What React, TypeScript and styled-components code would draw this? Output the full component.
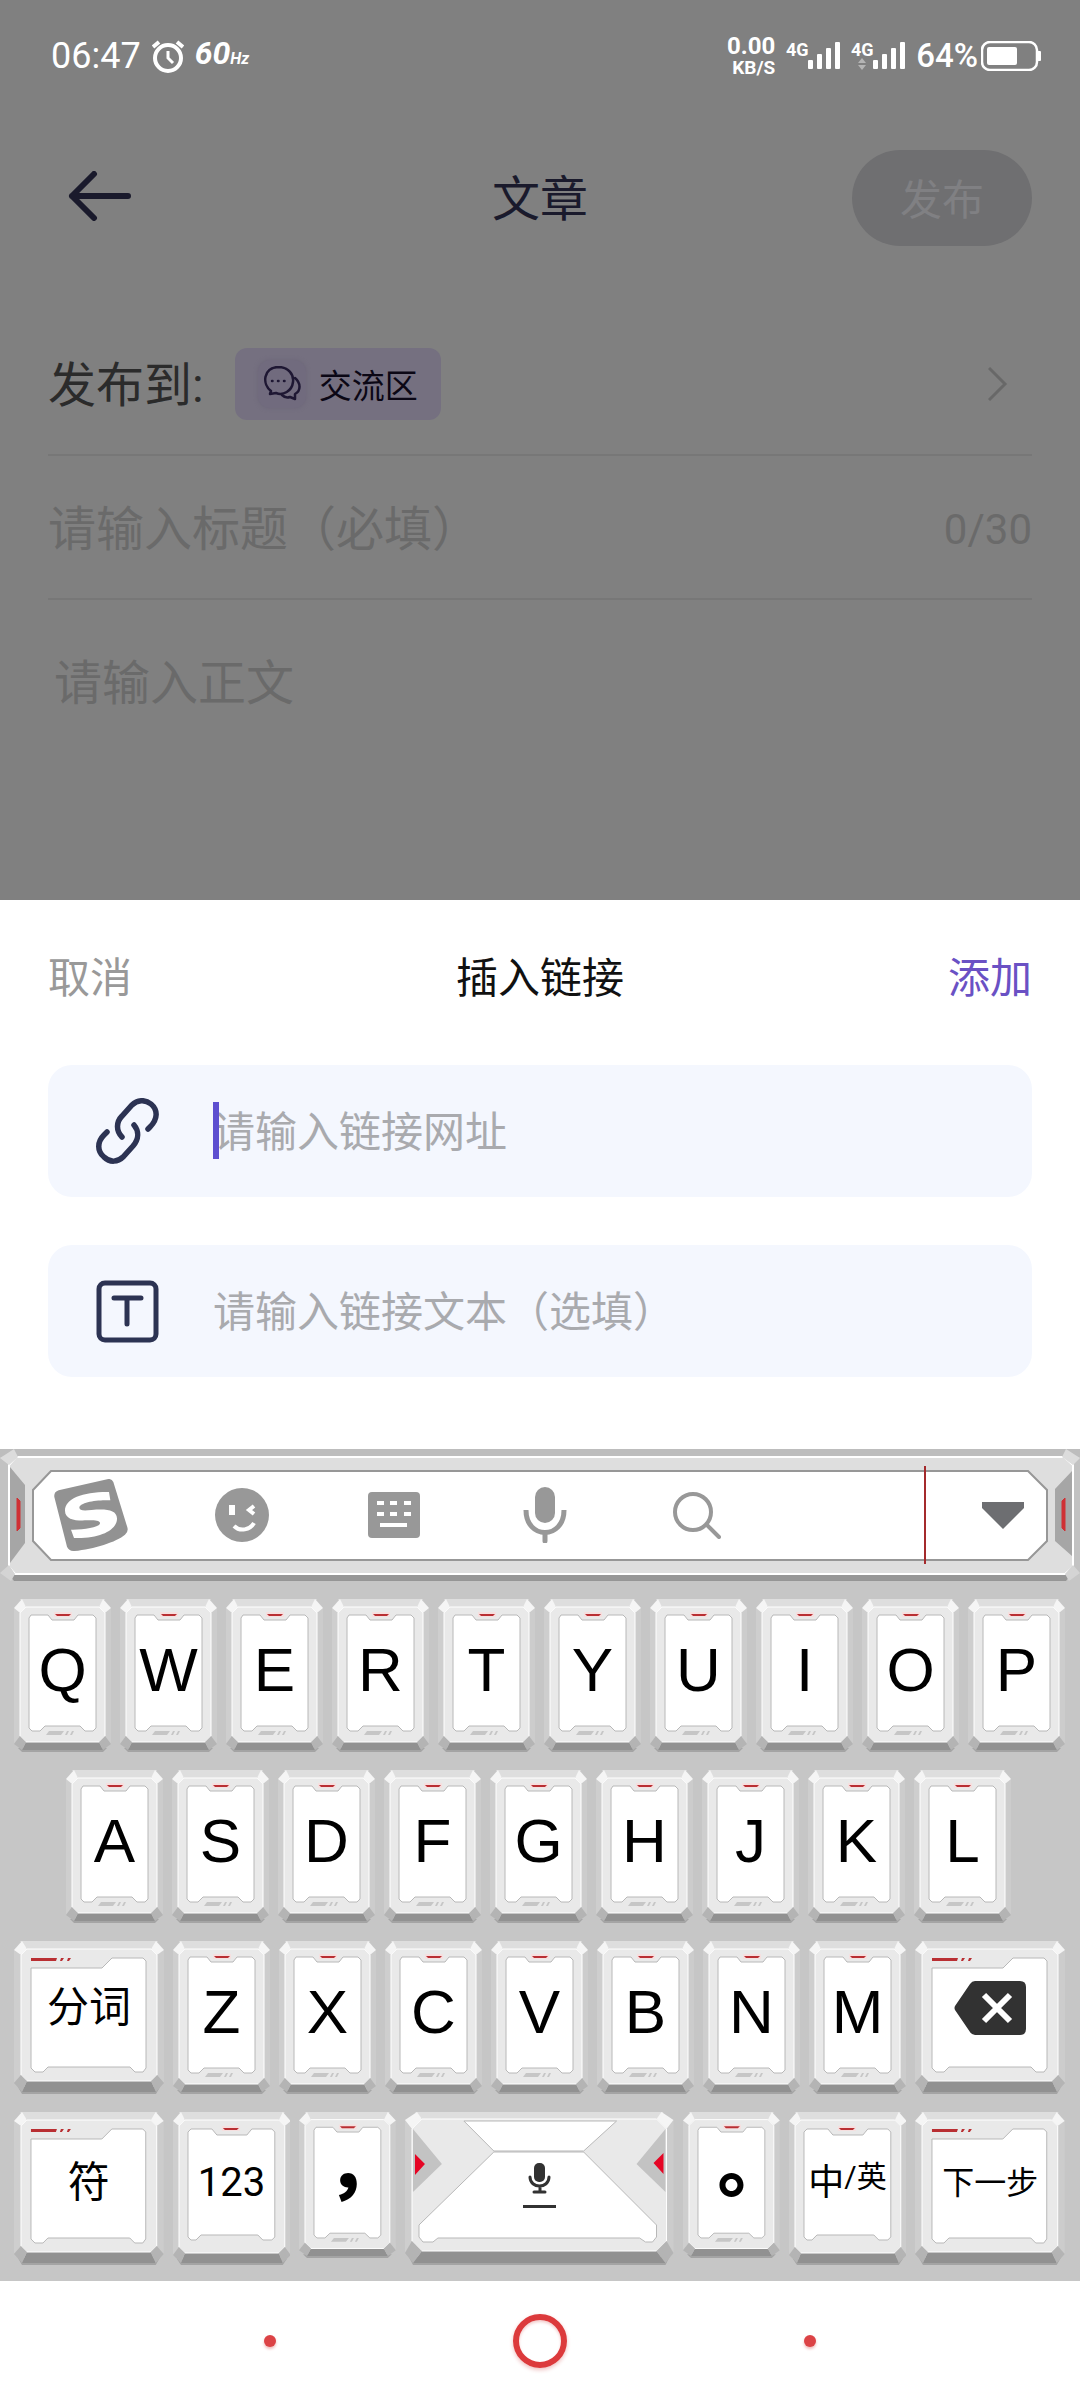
import React from "react";
import styled, { createGlobalStyle } from "styled-components";

const GlobalStyle = createGlobalStyle`
  *, *::before, *::after { box-sizing: border-box; }
  body { margin: 0; background: #fff; }
  button, input, textarea {
    margin: 0; padding: 0; border: 0; background: none;
    font: inherit; color: inherit; outline: none;
  }
  svg { display: block; flex: none; }
`;

const Screen = styled.div`
  display: flex;
  flex-direction: column;
  min-height: 100vh;
  font-family: Roboto, "Noto Sans CJK SC", sans-serif;
`;

/* ---------- dimmed editor ---------- */

const Editor = styled.main`
  flex: 1;
  display: flex;
  flex-direction: column;
  background: #808080;
`;

const StatusBar = styled.div`
  display: flex;
  align-items: center;
  justify-content: space-between;
  height: 112px;
  padding: 0 39px 0 51px;
  color: #fff;
`;

const StatusGroup = styled.div`
  display: flex;
  align-items: center;
  gap: 11px;
`;

const Clock = styled.time`
  font-size: 36px;
  line-height: 40px;
`;

const Refresh = styled.span`
  font-size: 32px;
  line-height: 40px;
  font-weight: 700;
  font-style: italic;
  small { font-size: 16px; }
`;

const NetSpeed = styled.div`
  display: flex;
  flex-direction: column;
  align-items: flex-end;
  font-size: 24px;
  line-height: 24px;
  font-weight: 700;
  span:last-child { font-size: 19px; line-height: 20px; }
`;

const Signal = styled.div`
  display: flex;
  align-items: flex-end;
`;

const SignalLabel = styled.span`
  display: flex;
  flex-direction: column;
  align-items: center;
  height: 28px;
  width: 22px;
  font-size: 18px;
  line-height: 16px;
  font-weight: 700;
`;

const BatteryGroup = styled.div`
  display: flex;
  align-items: center;
  gap: 3px;
  font-size: 33px;
  line-height: 40px;
  font-weight: 500;
`;

const TitleBar = styled.header`
  display: grid;
  grid-template-columns: 1fr auto 1fr;
  align-items: center;
  height: 172px;
  padding: 0 48px;
`;

const BackButton = styled.button`
  justify-self: start;
  padding: 0 20px 5px;
`;

const PageTitle = styled.h1`
  margin: 0;
  padding-top: 4px;
  font-size: 48px;
  line-height: 56px;
  font-weight: 400;
  color: #1a1a2c;
`;

const PublishButton = styled.button`
  justify-self: end;
  width: 180px;
  height: 96px;
  padding-bottom: 4px;
  border-radius: 48px;
  background: #6f6f71;
  color: #808083;
  font-size: 42px;
`;

const Line = styled.div`
  display: flex;
  align-items: center;
  height: 144px;
  margin: 0 48px;
  padding-top: 4px;
  border-bottom: 2px solid #777;
  font-size: 48px;
  color: #2b2b2b;
`;

const TargetLine = styled(Line)`
  height: 172px;
  padding-top: 30px;
`;

const TargetLabel = styled.span`
  padding-bottom: 6px;
`;

const Chip = styled.button`
  display: flex;
  align-items: center;
  gap: 13px;
  height: 72px;
  margin-left: 31px;
  padding: 0 23px;
  border-radius: 12px;
  background: #757080;
  font-size: 33px;
  color: #0b0715;
`;

const ChipIcon = styled.span`
  display: grid;
  place-items: center;
  width: 48px;
  height: 48px;
  border-radius: 12px;
  background: #716b7e;
  box-shadow: 0 0 4px #6c6678;
`;

const MoreButton = styled.button`
  margin-left: auto;
  padding: 0 24px;
`;

const TitleInput = styled.input`
  flex: 1;
  min-width: 0;
  height: 72px;
  &::placeholder { color: #6a6a6a; opacity: 1; }
`;

const Counter = styled.span`
  font-size: 42px;
  color: #6a6a6a;
`;

const BodyInput = styled.textarea`
  flex: 1;
  min-height: 200px;
  margin: 48px 48px 0 54px;
  font-size: 48px;
  line-height: 72px;
  resize: none;
  &::placeholder { color: #6a6a6a; opacity: 1; }
`;

/* ---------- link sheet ---------- */

const Sheet = styled.section`
  display: flex;
  flex-direction: column;
  gap: 48px;
  padding: 0 48px 72px;
  background: #fff;
  font-size: 42px;
`;

const SheetHeader = styled.div`
  display: grid;
  grid-template-columns: 1fr auto 1fr;
  align-items: center;
  height: 117px;
  padding-top: 32px;
`;

const SheetTitle = styled.h2`
  margin: 0;
  font-size: 42px;
  font-weight: 400;
  color: #111;
`;

const SheetAction = styled.button<{ $primary?: boolean }>`
  justify-self: ${(p) => (p.$primary ? "end" : "start")};
  color: ${(p) => (p.$primary ? "#6a51c4" : "#999")};
`;

const Field = styled.label`
  display: flex;
  align-items: center;
  gap: 54px;
  height: 132px;
  padding: 0 48px;
  border-radius: 24px;
  background: #f4f7fe;
`;

const FieldBox = styled.span`
  position: relative;
  flex: 1;
  display: flex;
`;

const FieldInput = styled.input`
  flex: 1;
  min-width: 0;
  height: 64px;
  padding-top: 2px;
  &::placeholder { color: #a9aaae; opacity: 1; }
`;

const Caret = styled.span`
  position: absolute;
  left: 0;
  top: 3px;
  width: 6px;
  height: 57px;
  background: #5d4fd0;
`;

/* ---------- keyboard ---------- */

const Keyboard = styled.section`
  display: flex;
  flex-direction: column;
  gap: 18px;
  padding-bottom: 16px;
  background: #c6c6c6;
  color: #000;
`;

const Skin = styled.svg`
  position: absolute;
  inset: 0;
  width: 100%;
  height: 100%;
`;

const Toolbar = styled.div`
  position: relative;
  display: flex;
  align-items: center;
  height: 132px;
  padding-left: 15px;
`;

const Tools = styled.div`
  position: relative;
  flex: 1;
  display: grid;
  grid-template-columns: repeat(6, 1fr);
  align-items: center;
  height: 98px;
  border-right: 2px solid #a42a2c;
`;

const Tool = styled.button`
  position: relative;
  display: grid;
  place-items: center;
  height: 98px;
`;

const HideTool = styled(Tool)`
  width: 154px;
`;

const KeyRow = styled.div<{ $inset?: boolean }>`
  display: flex;
  align-items: flex-start;
  gap: 9px;
  padding: ${(p) => (p.$inset ? "0 69px 0 66px" : "0 15px 0 14px")};
`;

const KeyButton = styled.button<{ $grow: number; $short?: boolean }>`
  position: relative;
  flex: ${(p) => p.$grow} 1 0;
  min-width: 0;
  height: ${(p) => (p.$short ? 146 : 153)}px;
  display: flex;
  flex-direction: column;
`;

/* The band is measured from the key's top edge; the label is centred in it. */
const KeyLabel = styled.span<{ $size: number; $band: number; $face?: "letter" | "mark" }>`
  position: relative;
  display: flex;
  align-items: center;
  justify-content: center;
  width: 100%;
  height: ${(p) => p.$band}px;
  font-family: ${(p) =>
    p.$face === "letter"
      ? '"Liberation Sans", sans-serif'
      : p.$face === "mark"
        ? '"Noto Sans CJK TC", sans-serif'
        : 'Roboto, "Noto Sans CJK SC", sans-serif'};
  font-weight: ${(p) => (p.$face === "mark" ? 900 : 400)};
  font-size: ${(p) => p.$size}px;
  line-height: 72px;
  white-space: nowrap;
`;

const AltLabel = styled.span`
  padding-bottom: 12px;
  font-size: 30px;
`;

const NavBar = styled.nav`
  display: grid;
  grid-template-columns: repeat(3, 1fr);
  height: 119px;
  padding: 0 12.5%;
  background: #fff;
`;

const NavButton = styled.button`
  display: grid;
  place-items: center;
`;

const NavDot = styled.span`
  width: 12px;
  height: 12px;
  border-radius: 50%;
  background: #dc4346;
  box-shadow: 0 2px 3px #f0b9b9;
`;

const NavRing = styled.span`
  width: 54px;
  height: 54px;
  border: 6px solid #dc3a3c;
  border-radius: 50%;
  box-shadow: 0 2px 4px #efc0c0, inset 0 2px 3px #f3cccc;
`;

/* ---------- key skins ---------- */

type SkinKind = "letter" | "mid" | "wide" | "space";

const points = (list: number[][]) => list.map((p) => p.join(",")).join(" ");

/* Bevelled cap shared by every key: x/y are the face insets, b its lower edge. */
function Cap({ w, x, y, b, c = 6 }: { w: number; x: number; y: number; b: number; c?: number }) {
  const r = w - x;
  return (
    <>
      <polygon points={points([[4, b + 6], [w - 4, b + 6], [w - 8, 153], [8, 153]])} fill="#a4a4a4" />
      <polygon points={points([[0, y + 1], [x, y + c], [x, b - c], [0, b + 2]])} fill="#cecece" />
      <polygon points={points([[w, y + 1], [r, y + c], [r, b - c], [w, b + 2]])} fill="#cccccc" />
      <polygon points={points([[c, 0], [w - c, 0], [r - c, y], [x + c, y]])} fill="#dedede" />
      <polygon points={points([[x + c, b], [r - c, b], [w - 8, 151], [8, 151]])} fill="#919191" />
      <polygon
        points={points([[x + c, y], [r - c, y], [r, y + c], [r, b - c], [r - c, b], [x + c, b], [x, b - c], [x, y + c]])}
        fill="#e9e9e9"
        stroke="#fff"
      />
      <polygon points={points([[0, y + 1], [c + 2, 0], [x + c, y], [x, y + c]])} fill="#f5f5f5" />
      <polygon points={points([[w, y + 1], [w - c - 2, 0], [r - c, y], [r, y + c]])} fill="#f5f5f5" />
      <polygon points={points([[0, b + 2], [x, b - c], [x + c, b], [8, 151]])} fill="#b4b4b4" />
      <polygon points={points([[w, b + 2], [r, b - c], [r - c, b], [w - 8, 151]])} fill="#b4b4b4" />
    </>
  );
}

const skinWidth: Record<SkinKind, number> = { letter: 97, mid: 118, wide: 150, space: 269 };

function KeySkin({ kind }: { kind: SkinKind }) {
  const w = skinWidth[kind];
  return (
    <Skin viewBox={`0 0 ${w} 153`} preserveAspectRatio="none" aria-hidden="true">
      {kind === "letter" && (
        <>
          <Cap w={w} x={6} y={8} b={143} />
          <path
            d="M17 16H34L38 21H60L64 16H79L82 19V129L79 132H71L66 127H31L26 132H18L15 129V19Z"
            fill="#fff" stroke="#b8b8b8"
          />
          <path d="M40 13H58V18H40Z" fill="#f6dfdf" />
          <path d="M41 15H57L55 17H43Z" fill="#b92f33" />
          <path d="M35 132H50L47 136H32ZM53 132H55L53 136H51ZM58 132H60L58 136H56Z" fill="#c6c6c6" />
        </>
      )}
      {kind === "mid" && (
        <>
          <Cap w={w} x={6} y={8} b={141} />
          <path
            d="M18 17H39L44 23H74L79 17H99L102 20V125L99 128H90L85 123H28L23 128H18L15 125V20Z"
            fill="#fff" stroke="#b8b8b8"
          />
          <path d="M49 14H67V19H49Z" fill="#f6dfdf" />
          <path d="M50 16H66L64 18H52Z" fill="#b92f33" />
        </>
      )}
      {kind === "wide" && (
        <>
          <Cap w={w} x={7} y={8} b={140} />
          <path
            d="M17 27H88L98 17H129L132 20V127L129 131H121L116 126H34L29 131H21L17 127Z"
            fill="#fff" stroke="#b8b8b8"
          />
          <path d="M17 17H43L42 20H17ZM47 17H50L48 20H46ZM54 17H57L55 20H53Z" fill="#b92f33" />
        </>
      )}
      {kind === "space" && (
        <>
          <Cap w={w} x={7} y={7} b={139} c={10} />
          <path d="M8 17L37 52L8 80ZM261 17L232 52L261 80Z" fill="#c3c3c3" />
          <path d="M10 42L20 52L10 63ZM259 41L249 51L259 62Z" fill="#e50524" />
          <path d="M59 9H212L179 39H89Z" fill="#fff" stroke="#b8b8b8" />
          <path
            d="M89 40H179L252 113V125L248 130H241L235 126H33L28 130H18L14 125V113Z"
            fill="#fff" stroke="#b8b8b8"
          />
        </>
      )}
    </Skin>
  );
}

function ToolbarSkin() {
  return (
    <Skin viewBox="0 0 1080 132" preserveAspectRatio="none" aria-hidden="true">
      <path d="M0 0H1080V8H0Z" fill="#bdbdbd" />
      <path d="M0 8H9V124H0ZM1072 8H1080V124H1072Z" fill="#c2c2c2" />
      <path d="M8 124H1072L1066 132H14Z" fill="#969696" />
      <path d="M16 8H1064L1073 16V118L1065 125H15L9 118V16Z" fill="#dedede" stroke="#fff" strokeWidth="2" />
      <path d="M10 18L25 36V94L10 114ZM1072 22L1055 40V92L1072 107Z" fill="#a6a6a6" />
      <path d="M17 49L20 52V79L17 82ZM1065 49L1062 52V79L1065 82Z" fill="#cf3034" stroke="#cf3034" />
      <path d="M0 9L14 0L18 8L9 16ZM1080 9L1066 0L1062 8L1073 16Z" fill="#dcdcdc" />
      <path d="M0 124L9 116L15 125L11 132ZM1080 124L1073 116L1065 125L1069 132Z" fill="#d4d4d4" />
      <path d="M51 22H1028L1047 41V92L1028 111H51L33 92V41Z" fill="#fff" stroke="#979797" strokeWidth="2" />
    </Skin>
  );
}

type KeyProps = {
  kind?: SkinKind;
  short?: boolean;
  size?: number;
  band?: number;
  face?: "letter" | "mark";
  name?: string;
  children: React.ReactNode;
};

function Key({ kind = "letter", short, size = 42, band = 142, face, name, children }: KeyProps) {
  return (
    <KeyButton type="button" $grow={skinWidth[kind]} $short={short} aria-label={name}>
      <KeySkin kind={kind} />
      <KeyLabel $size={size} $band={band} $face={face}>{children}</KeyLabel>
    </KeyButton>
  );
}

const letterKeys = (letters: string) =>
  letters.split("").map((l) => <Key key={l} size={62} face="letter">{l}</Key>);

/* ---------- icons ---------- */

const AlarmIcon = () => (
  <svg width="32" height="33" viewBox="0 0 32 33" fill="none" stroke="#fff">
    <circle cx="16" cy="18" r="13" strokeWidth="4" />
    <path d="M16 11V18L21 23" strokeWidth="3" />
    <path d="M1 7L7 2M31 7L25 2" strokeWidth="4" />
  </svg>
);

const Bars = () => (
  <svg width="32" height="28" viewBox="0 0 32 28" fill="#fff">
    <rect x="0" y="18" width="5" height="9" rx="1" />
    <rect x="9" y="12" width="5" height="15" rx="1" />
    <rect x="18" y="6" width="5" height="21" rx="1" />
    <rect x="27" y="0" width="5" height="27" rx="1" />
  </svg>
);

const BatteryIcon = () => (
  <svg width="60" height="30" viewBox="0 0 60 30">
    <rect x="1" y="1" width="55" height="28" rx="8" fill="none" stroke="#fff" strokeWidth="2.5" />
    <rect x="6" y="6" width="30" height="18" rx="2" fill="#fff" />
    <rect x="56" y="10" width="4" height="10" rx="1" fill="#fff" />
  </svg>
);

const ArrowIcon = () => (
  <svg width="64" height="50" viewBox="0 0 64 50" fill="none" stroke="#1a1a2c" strokeWidth="6" strokeLinecap="round" strokeLinejoin="round">
    <path d="M26 3L4 25L26 47M4 25H60" />
  </svg>
);

const ChatIcon = () => (
  <svg width="38" height="36" viewBox="0 0 38 36" fill="none" stroke="#1e1733" strokeWidth="2.5" strokeLinejoin="round" strokeLinecap="round">
    <path d="M7 28L8 25C-1 18 0 2 15 1C26 1 31 9 30 16C29 25 20 30 13 27Z" />
    <path d="M32 12C38 17 38 25 32 28V33L27 31C24 32 21 31 19 29" />
    <path d="M9 15H9.500M15 15H15.500M21 15H21.500" />
  </svg>
);

const ChevronIcon = () => (
  <svg width="20" height="34" viewBox="0 0 20 34" fill="none" stroke="#686868" strokeWidth="3">
    <path d="M1 1L17 17L1 33" />
  </svg>
);

const LinkIcon = () => (
  <svg width="63" height="66" viewBox="0 0 63 66" fill="none" stroke="#2c3353" strokeWidth="5.500" strokeLinecap="round">
    <path d="M52 31L54 29C62 21 62 12 55 6C49 1 41 2 36 7L26 18C20 24 20 33 26 39" />
    <path d="M11 34L8 37C1 44 1 53 8 59C14 65 22 64 27 59L37 48C43 41 43 33 38 27" />
  </svg>
);

const TextIcon = () => (
  <svg width="63" height="63" viewBox="0 0 63 63" fill="none" stroke="#2c3353" strokeWidth="5" strokeLinecap="round">
    <rect x="3" y="3" width="57" height="57" rx="6" />
    <path d="M18 18H45M31 18V44" />
  </svg>
);

const SogouIcon = () => (
  <svg width="74" height="72" viewBox="162 117 222 216">
    <path d="M176 151L325 117Q336 116 340 126L382 262Q386 275 375 284C350 306 280 327 224 333Q207 334 201 320L163 171Q161 156 176 151Z" fill="#929292" />
    <path d="M327 156C250 155 195 175 195 212C195 240 230 243 262 241C290 239 301 243 300 250C299 262 250 270 213 269L222 294C300 297 352 270 351 235C350 210 320 206 275 210C250 213 238 212 238 202C240 188 290 178 331 181Z" fill="#fff" />
  </svg>
);

const EmojiIcon = () => (
  <svg width="54" height="54" viewBox="0 0 54 54">
    <circle cx="27" cy="27" r="27" fill="#989898" />
    <rect x="14" y="17" width="6" height="10" fill="#fff" />
    <path d="M39 18L34 22L39 26M19 38C25 44 35 42 39 35" fill="none" stroke="#fff" strokeWidth="4" />
  </svg>
);

const BoardIcon = () => (
  <svg width="52" height="46" viewBox="0 0 52 46">
    <rect width="52" height="46" rx="4" fill="#989898" />
    <path d="M9 9H16V13H9ZM22 9H29V13H22ZM36 9H43V13H36ZM9 20H16V24H9ZM22 20H29V24H22ZM36 20H43V24H36ZM12 31H39V35H12Z" fill="#fff" />
  </svg>
);

const MicIcon = () => (
  <svg width="44" height="56" viewBox="0 0 44 56">
    <rect x="12" y="0" width="20" height="36" rx="10" fill="#989898" />
    <path d="M3 23C3 53 41 53 41 23" fill="none" stroke="#989898" strokeWidth="5" />
    <path d="M22 46V54" stroke="#989898" strokeWidth="5" strokeLinecap="round" />
  </svg>
);

const SearchIcon = () => (
  <svg width="48" height="48" viewBox="0 0 48 48" fill="none" stroke="#989898" strokeWidth="4" strokeLinecap="round">
    <circle cx="20" cy="21" r="18" />
    <path d="M34 34L46 46" />
  </svg>
);

const HideIcon = () => (
  <svg width="42" height="27" viewBox="0 0 42 27" fill="#6d6e71">
    <path d="M0 0H42V6L21 27L0 6Z" />
  </svg>
);

const DeleteIcon = () => (
  <svg width="72" height="54" viewBox="0 0 72 54">
    <path d="M21 0H66Q72 0 72 6V48Q72 54 66 54H21Q18 54 16 51L1 29Q0 27 1 25L16 3Q18 0 21 0Z" fill="#323232" />
    <path d="M30 14L56 40M56 14L30 40" stroke="#fff" strokeWidth="6" />
  </svg>
);

const SpaceMicIcon = () => (
  <svg width="34" height="46" viewBox="0 0 34 46">
    <rect x="11" y="0" width="11" height="19" rx="5" fill="#323232" />
    <path d="M7 14C7 26 26 26 26 14M17 23V29M11 29H22" fill="none" stroke="#323232" strokeWidth="3" strokeLinecap="round" />
    <rect x="0" y="42" width="33" height="3" fill="#323232" />
  </svg>
);

const DataArrows = () => (
  <svg width="8" height="12" viewBox="0 0 8 12" fill="#b5b5b5">
    <path d="M4 0L8 5H0ZM4 12L0 7H8Z" />
  </svg>
);

export default function App() {
  return (
    <Screen>
      <GlobalStyle />
      <Editor>
        <StatusBar>
          <StatusGroup>
            <Clock>06:47</Clock>
            <AlarmIcon />
            <Refresh>60<small>Hz</small></Refresh>
          </StatusGroup>
          <StatusGroup>
            <NetSpeed><span>0.00</span><span>KB/S</span></NetSpeed>
            <Signal><SignalLabel>4G</SignalLabel><Bars /></Signal>
            <Signal><SignalLabel>4G<DataArrows /></SignalLabel><Bars /></Signal>
            <BatteryGroup>64%<BatteryIcon /></BatteryGroup>
          </StatusGroup>
        </StatusBar>
        <TitleBar>
          <BackButton type="button" aria-label="返回"><ArrowIcon /></BackButton>
          <PageTitle>文章</PageTitle>
          <PublishButton type="button">发布</PublishButton>
        </TitleBar>
        <TargetLine>
          <TargetLabel>发布到:</TargetLabel>
          <Chip type="button"><ChipIcon><ChatIcon /></ChipIcon>交流区</Chip>
          <MoreButton type="button" aria-label="选择分区"><ChevronIcon /></MoreButton>
        </TargetLine>
        <Line>
          <TitleInput aria-label="标题" placeholder="请输入标题（必填）" maxLength={30} />
          <Counter>0/30</Counter>
        </Line>
        <BodyInput aria-label="正文" placeholder="请输入正文" />
      </Editor>

      <Sheet>
        <SheetHeader>
          <SheetAction type="button">取消</SheetAction>
          <SheetTitle>插入链接</SheetTitle>
          <SheetAction type="button" $primary>添加</SheetAction>
        </SheetHeader>
        <Field>
          <LinkIcon />
          <FieldBox>
            <FieldInput type="url" aria-label="链接网址" placeholder="请输入链接网址" />
            <Caret />
          </FieldBox>
        </Field>
        <Field>
          <TextIcon />
          <FieldBox>
            <FieldInput aria-label="链接文本" placeholder="请输入链接文本（选填）" />
          </FieldBox>
        </Field>
      </Sheet>

      <Keyboard>
        <Toolbar>
          <ToolbarSkin />
          <Tools>
            <Tool type="button" aria-label="菜单"><SogouIcon /></Tool>
            <Tool type="button" aria-label="表情"><EmojiIcon /></Tool>
            <Tool type="button" aria-label="键盘"><BoardIcon /></Tool>
            <Tool type="button" aria-label="语音"><MicIcon /></Tool>
            <Tool type="button" aria-label="搜索"><SearchIcon /></Tool>
          </Tools>
          <HideTool type="button" aria-label="收起"><HideIcon /></HideTool>
        </Toolbar>
        <KeyRow>{letterKeys("QWERTYUIOP")}</KeyRow>
        <KeyRow $inset>{letterKeys("ASDFGHJKL")}</KeyRow>
        <KeyRow>
          <Key kind="wide" band={134}>分词</Key>
          {letterKeys("ZXCVBNM")}
          <Key kind="wide" band={134} name="删除"><DeleteIcon /></Key>
        </KeyRow>
        <KeyRow>
          <Key kind="wide">符</Key>
          <Key kind="mid" size={40}>123</Key>
          <Key short size={72} band={138} face="mark">，</Key>
          <Key kind="space" band={148} name="空格"><SpaceMicIcon /></Key>
          <Key short size={72} band={138} face="mark">。</Key>
          <Key kind="mid" size={36}>中<AltLabel>/英</AltLabel></Key>
          <Key kind="wide" size={32}>下一步</Key>
        </KeyRow>
      </Keyboard>

      <NavBar>
        <NavButton type="button" aria-label="最近任务"><NavDot /></NavButton>
        <NavButton type="button" aria-label="主页"><NavRing /></NavButton>
        <NavButton type="button" aria-label="后退"><NavDot /></NavButton>
      </NavBar>
    </Screen>
  );
}
